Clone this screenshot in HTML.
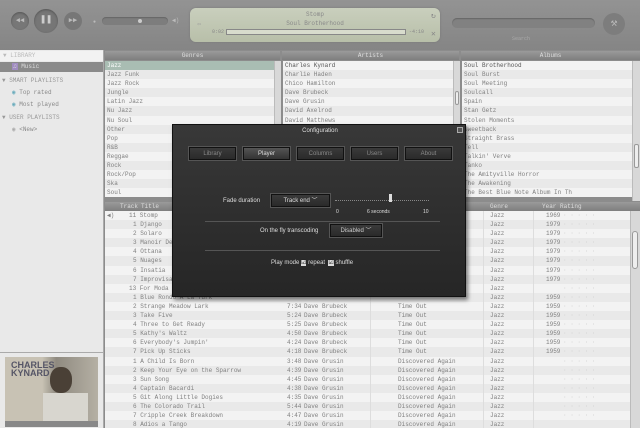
<!DOCTYPE html><html><head><meta charset="utf-8"><style>
*{margin:0;padding:0;box-sizing:border-box}
body{width:640px;height:428px;overflow:hidden;background:#8c8c8c;font-family:"Liberation Mono",monospace;font-size:6px;color:#808080;position:relative}
.a{position:absolute}
.list div{height:9.1px;line-height:9.1px;padding-left:2px;white-space:nowrap;overflow:hidden}
.list div:nth-child(even){background:#e9e9e9}
.list div:nth-child(odd){background:#f3f3f3}
.hdr{background:linear-gradient(#9a9a9a,#7e7e7e);color:#ddd;text-align:center;height:9px;line-height:9px}
.sb{background:#d8d8d8;border-left:1px solid #bbb}
.btn{background:linear-gradient(#3a3a3a,#2a2a2a);border:1px solid #111;box-shadow:0 0 0 1px #555;color:#888;text-align:center;font-size:6px}
.row{height:9.1px;line-height:9.1px;position:relative;white-space:nowrap}
.row span{position:absolute}
.dlg{color:#ddd;font-family:"Liberation Sans",sans-serif;font-size:6px}
</style></head><body>
<div class="a" style="left:0;top:0;width:640px;height:50px;background:linear-gradient(#939393,#858585)"></div>
<div class="a" style="left:11px;top:12px;width:18px;height:18px;border-radius:50%;background:#777;box-shadow:inset 0 1px 2px #555;color:#bbb;font-size:7px;text-align:center;line-height:18px">◀◀</div>
<div class="a" style="left:34px;top:9px;width:24px;height:24px;border-radius:50%;background:#767676;box-shadow:inset 0 1px 2px #555;color:#ccc;font-size:10px;font-weight:bold;text-align:center;line-height:24px">❚❚</div>
<div class="a" style="left:64px;top:12px;width:18px;height:18px;border-radius:50%;background:#777;color:#bbb;font-size:7px;text-align:center;line-height:18px">▶▶</div>
<div class="a" style="left:93px;top:19px;font-size:5px;color:#bbb">●</div>
<div class="a" style="left:102px;top:17px;width:66px;height:8px;border-radius:4px;background:#7d7d7d;box-shadow:inset 0 1px 1px #666"></div>
<div class="a" style="left:138px;top:19px;width:4px;height:4px;border-radius:50%;background:#ccc"></div>
<div class="a" style="left:172px;top:17px;font-size:6px;color:#bbb">◀)</div>
<div class="a" style="left:190px;top:8px;width:250px;height:34px;border-radius:6px;background:linear-gradient(#c9cfbd,#b8bfa9);box-shadow:0 0 2px #777"></div>
<div class="a" style="left:190px;top:11px;width:250px;text-align:center;color:#888">Stomp</div>
<div class="a" style="left:190px;top:20px;width:250px;text-align:center;color:#888">Soul Brotherhood</div>
<div class="a" style="left:197px;top:20px;color:#999;font-size:7px">⇦</div>
<div class="a" style="left:212px;top:29px;color:#888;font-size:5px">0:02</div>
<div class="a" style="left:226px;top:29px;width:180px;height:6px;border:1px solid #888;background:#d8dccd"></div>
<div class="a" style="left:409px;top:29px;color:#888;font-size:5px">-4:10</div>
<div class="a" style="left:431px;top:11px;color:#888;font-size:8px">↻</div>
<div class="a" style="left:431px;top:29px;color:#888;font-size:8px">✕</div>
<div class="a" style="left:452px;top:18px;width:143px;height:10px;border-radius:5px;background:#818181;box-shadow:inset 0 1px 1px #666"></div>
<div class="a" style="left:512px;top:36px;color:#aaa;font-size:5px">Search</div>
<div class="a" style="left:603px;top:13px;width:22px;height:22px;border-radius:50%;background:#7d7d7d;color:#bbb;text-align:center;line-height:22px;font-size:11px">⚒</div>
<div class="a" style="left:0;top:50px;width:104px;height:378px;background:#e9e9e9;border-right:1px solid #aaa"></div>
<div class="a" style="left:0;top:51px;width:103px;height:10px;background:#f2f2f2;color:#bbb;padding-left:3px;line-height:10px">▼ LIBRARY</div>
<div class="a" style="left:0;top:62px;width:103px;height:10px;background:#8a8a8a;color:#ddd;padding-left:12px;line-height:10px"><span style="background:#a08cc0;padding:0 1px">♫</span> Music</div>
<div class="a" style="left:2px;top:77px;color:#999">▼ SMART PLAYLISTS</div>
<div class="a" style="left:12px;top:89px;color:#888"><span style="color:#6ab;">◉</span> Top rated</div>
<div class="a" style="left:12px;top:101px;color:#888"><span style="color:#6ab;">◉</span> Most played</div>
<div class="a" style="left:2px;top:114px;color:#999">▼ USER PLAYLISTS</div>
<div class="a" style="left:12px;top:126px;color:#888"><span style="color:#aaa;">◉</span> &lt;New&gt;</div>
<div class="a" style="left:0;top:352px;width:103px;height:1px;background:#aaa"></div>
<div class="a" style="left:5px;top:357px;width:93px;height:70px;background:linear-gradient(90deg,#c8c2b4 40%,#8f8a80 55%,#b5b0a4)">
<div style="position:absolute;left:6px;top:4px;font-family:'Liberation Sans';font-weight:bold;font-size:9px;color:#556;line-height:8px">CHARLES<br>KYNARD</div>
<div style="position:absolute;left:45px;top:10px;width:22px;height:26px;border-radius:45%;background:#4a4036"></div>
<div style="position:absolute;left:38px;top:36px;width:45px;height:34px;background:#d8d6cf"></div>
<div style="position:absolute;left:0;bottom:0;width:93px;height:6px;background:#888"></div></div>
<div class="a hdr" style="left:105px;top:51px;width:175px">Genres</div>
<div class="a hdr" style="left:282px;top:51px;width:177px">Artists</div>
<div class="a hdr" style="left:461px;top:51px;width:179px">Albums</div>
<div class="a list" style="left:105px;top:61px;width:169px;height:140px;overflow:hidden">
<div style="background:#a9bdb3;color:#fff">Jazz</div><div>Jazz Funk</div><div>Jazz Rock</div><div>Jungle</div><div>Latin Jazz</div><div>Nu Jazz</div><div>Nu Soul</div><div>Other</div><div>Pop</div><div>R&amp;B</div><div>Reggae</div><div>Rock</div><div>Rock/Pop</div><div>Ska</div><div>Soul</div></div>
<div class="a sb" style="left:274px;top:61px;width:7px;height:140px"></div>
<div class="a list" style="left:283px;top:61px;width:170px;height:140px;overflow:hidden">
<div style="color:#555">Charles Kynard</div><div>Charlie Haden</div><div>Chico Hamilton</div><div>Dave Brubeck</div><div>Dave Grusin</div><div>David Axelrod</div><div>David Matthews</div><div>Dexter Gordon</div><div>Don Ellis</div><div>Donald Byrd</div><div>Duke Ellington</div><div>Eddie Harris</div><div>Ella Fitzgerald</div><div>Eric Dolphy</div><div>Erroll Garner</div></div>
<div class="a sb" style="left:453px;top:61px;width:7px;height:140px"><div style="position:absolute;left:1px;top:30px;width:4px;height:14px;border:1px solid #999;border-radius:2px;background:#eee"></div></div>
<div class="a list" style="left:462px;top:61px;width:170px;height:140px;overflow:hidden">
<div style="color:#555">Soul Brotherhood</div><div>Soul Burst</div><div>Soul Meeting</div><div>Soulcall</div><div>Spain</div><div>Stan Getz</div><div>Stolen Moments</div><div>Sweetback</div><div>Straight Brass</div><div>Tell</div><div>Talkin' Verve</div><div>Tanko</div><div>The Amityville Horror</div><div>The Awakening</div><div>The Best Blue Note Album In Th</div></div>
<div class="a sb" style="left:632px;top:61px;width:8px;height:140px"><div style="position:absolute;left:1px;top:83px;width:5px;height:24px;border:1px solid #999;border-radius:2px;background:#eee"></div></div>
<div class="a hdr" style="left:105px;top:202px;width:535px;text-align:left;height:9px">
<span style="position:absolute;left:15px">Track</span><span style="position:absolute;left:36px">Title</span><span style="position:absolute;left:385px">Genre</span><span style="position:absolute;left:437px">Year</span><span style="position:absolute;left:455px">Rating</span></div>
<div class="a list" style="left:105px;top:211px;width:525px;height:217px;overflow:hidden">
<div class="row"><span style="left:2px">◀)</span><span style="left:24px">11 Stomp</span><span style="left:385px">Jazz</span><span style="left:441px">1969</span><span style="left:458px;color:#ccc">· · · · ·</span></div>
<div class="row"><span style="left:28px">1 Django</span><span style="left:385px">Jazz</span><span style="left:441px">1979</span><span style="left:458px;color:#ccc">· · · · ·</span></div>
<div class="row"><span style="left:28px">2 Solaro</span><span style="left:385px">Jazz</span><span style="left:441px">1979</span><span style="left:458px;color:#ccc">· · · · ·</span></div>
<div class="row"><span style="left:28px">3 Manoir De Mes Reves</span><span style="left:385px">Jazz</span><span style="left:441px">1979</span><span style="left:458px;color:#ccc">· · · · ·</span></div>
<div class="row"><span style="left:28px">4 Ottana</span><span style="left:385px">Jazz</span><span style="left:441px">1979</span><span style="left:458px;color:#ccc">· · · · ·</span></div>
<div class="row"><span style="left:28px">5 Nuages</span><span style="left:385px">Jazz</span><span style="left:441px">1979</span><span style="left:458px;color:#ccc">· · · · ·</span></div>
<div class="row"><span style="left:28px">6 Insatia</span><span style="left:385px">Jazz</span><span style="left:441px">1979</span><span style="left:458px;color:#ccc">· · · · ·</span></div>
<div class="row"><span style="left:28px">7 Improvisation</span><span style="left:385px">Jazz</span><span style="left:441px">1979</span><span style="left:458px;color:#ccc">· · · · ·</span></div>
<div class="row"><span style="left:24px">13 For Moda</span><span style="left:385px">Jazz</span><span style="left:458px;color:#ccc">· · · · ·</span></div>
<div class="row"><span style="left:28px">1 Blue Rondo A La Turk</span><span style="left:385px">Jazz</span><span style="left:441px">1959</span><span style="left:458px;color:#ccc">· · · · ·</span></div>
<div class="row"><span style="left:28px">2 Strange Meadow Lark</span><span style="left:182px">7:34</span><span style="left:199px">Dave Brubeck</span><span style="left:293px">Time Out</span><span style="left:385px">Jazz</span><span style="left:441px">1959</span><span style="left:458px;color:#ccc">· · · · ·</span></div>
<div class="row"><span style="left:28px">3 Take Five</span><span style="left:182px">5:24</span><span style="left:199px">Dave Brubeck</span><span style="left:293px">Time Out</span><span style="left:385px">Jazz</span><span style="left:441px">1959</span><span style="left:458px;color:#ccc">· · · · ·</span></div>
<div class="row"><span style="left:28px">4 Three to Get Ready</span><span style="left:182px">5:25</span><span style="left:199px">Dave Brubeck</span><span style="left:293px">Time Out</span><span style="left:385px">Jazz</span><span style="left:441px">1959</span><span style="left:458px;color:#ccc">· · · · ·</span></div>
<div class="row"><span style="left:28px">5 Kathy's Waltz</span><span style="left:182px">4:50</span><span style="left:199px">Dave Brubeck</span><span style="left:293px">Time Out</span><span style="left:385px">Jazz</span><span style="left:441px">1959</span><span style="left:458px;color:#ccc">· · · · ·</span></div>
<div class="row"><span style="left:28px">6 Everybody's Jumpin'</span><span style="left:182px">4:24</span><span style="left:199px">Dave Brubeck</span><span style="left:293px">Time Out</span><span style="left:385px">Jazz</span><span style="left:441px">1959</span><span style="left:458px;color:#ccc">· · · · ·</span></div>
<div class="row"><span style="left:28px">7 Pick Up Sticks</span><span style="left:182px">4:18</span><span style="left:199px">Dave Brubeck</span><span style="left:293px">Time Out</span><span style="left:385px">Jazz</span><span style="left:441px">1959</span><span style="left:458px;color:#ccc">· · · · ·</span></div>
<div class="row"><span style="left:28px">1 A Child Is Born</span><span style="left:182px">3:48</span><span style="left:199px">Dave Grusin</span><span style="left:293px">Discovered Again</span><span style="left:385px">Jazz</span><span style="left:458px;color:#ccc">· · · · ·</span></div>
<div class="row"><span style="left:28px">2 Keep Your Eye on the Sparrow</span><span style="left:182px">4:39</span><span style="left:199px">Dave Grusin</span><span style="left:293px">Discovered Again</span><span style="left:385px">Jazz</span><span style="left:458px;color:#ccc">· · · · ·</span></div>
<div class="row"><span style="left:28px">3 Sun Song</span><span style="left:182px">4:45</span><span style="left:199px">Dave Grusin</span><span style="left:293px">Discovered Again</span><span style="left:385px">Jazz</span><span style="left:458px;color:#ccc">· · · · ·</span></div>
<div class="row"><span style="left:28px">4 Captain Bacardi</span><span style="left:182px">4:38</span><span style="left:199px">Dave Grusin</span><span style="left:293px">Discovered Again</span><span style="left:385px">Jazz</span><span style="left:458px;color:#ccc">· · · · ·</span></div>
<div class="row"><span style="left:28px">5 Git Along Little Dogies</span><span style="left:182px">4:35</span><span style="left:199px">Dave Grusin</span><span style="left:293px">Discovered Again</span><span style="left:385px">Jazz</span><span style="left:458px;color:#ccc">· · · · ·</span></div>
<div class="row"><span style="left:28px">6 The Colorado Trail</span><span style="left:182px">5:44</span><span style="left:199px">Dave Grusin</span><span style="left:293px">Discovered Again</span><span style="left:385px">Jazz</span><span style="left:458px;color:#ccc">· · · · ·</span></div>
<div class="row"><span style="left:28px">7 Cripple Creek Breakdown</span><span style="left:182px">4:47</span><span style="left:199px">Dave Grusin</span><span style="left:293px">Discovered Again</span><span style="left:385px">Jazz</span><span style="left:458px;color:#ccc">· · · · ·</span></div>
<div class="row"><span style="left:28px">8 Adios a Tango</span><span style="left:182px">4:19</span><span style="left:199px">Dave Grusin</span><span style="left:293px">Discovered Again</span><span style="left:385px">Jazz</span></div>
</div>
<div class="a" style="left:370px;top:211px;width:1px;height:217px;background:#ddd"></div>
<div class="a" style="left:483px;top:211px;width:1px;height:217px;background:#ddd"></div>
<div class="a" style="left:533px;top:211px;width:1px;height:217px;background:#ddd"></div>
<div class="a sb" style="left:630px;top:211px;width:10px;height:217px"><div style="position:absolute;left:1px;top:20px;width:6px;height:38px;border:1px solid #999;border-radius:3px;background:#eee"></div></div>
<div class="a dlg" style="left:172px;top:124px;width:294px;height:173px;background:linear-gradient(#383838,#262626);border:1px solid #111;box-shadow:2px 3px 4px rgba(0,0,0,.5)">
<div class="a" style="left:0;top:3px;width:294px;text-align:center">Configuration</div>
<div class="a" style="right:2px;top:2px;width:6px;height:6px;border:1px solid #aaa;background:#555"></div>
<div class="a btn" style="left:16px;top:22px;width:47px;height:13px;line-height:12px">Library</div>
<div class="a btn" style="left:70px;top:22px;width:47px;height:13px;line-height:12px;color:#ddd;background:linear-gradient(#555,#333)">Player</div>
<div class="a btn" style="left:124px;top:22px;width:47px;height:13px;line-height:12px">Columns</div>
<div class="a btn" style="left:178px;top:22px;width:47px;height:13px;line-height:12px">Users</div>
<div class="a btn" style="left:232px;top:22px;width:47px;height:13px;line-height:12px">About</div>
<div class="a" style="left:50px;top:73px">Fade duration</div>
<div class="a btn" style="left:98px;top:69px;width:59px;height:13px;line-height:12px;color:#ddd">Track end ﹀</div>
<div class="a" style="left:162px;top:75px;width:94px;height:1px;border-top:1px dotted #888"></div>
<div class="a" style="left:216px;top:69px;width:3px;height:8px;background:#ddd"></div>
<div class="a" style="left:163px;top:84px;font-size:5px">0</div>
<div class="a" style="left:194px;top:84px;font-size:5px">6 seconds</div>
<div class="a" style="left:250px;top:84px;font-size:5px">10</div>
<div class="a" style="left:32px;top:96px;width:235px;height:1px;background:#555"></div>
<div class="a" style="left:87px;top:103px">On the fly transcoding</div>
<div class="a btn" style="left:157px;top:99px;width:52px;height:13px;line-height:12px;color:#ccc">Disabled ﹀</div>
<div class="a" style="left:32px;top:125px;width:235px;height:1px;background:#555"></div>
<div class="a" style="left:98px;top:134px">Play mode <span style="background:#ddd;color:#222">☑</span> repeat &nbsp;<span style="background:#ddd;color:#222">☑</span> shuffle</div>
</div>
</body></html>
